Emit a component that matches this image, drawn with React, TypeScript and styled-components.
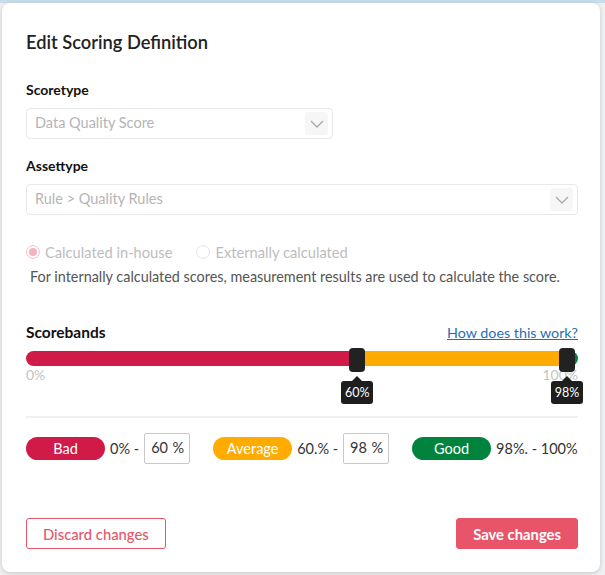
import React from 'react';
import styled, { createGlobalStyle } from 'styled-components';

const GlobalStyle = createGlobalStyle`
  html, body {
    margin: 0;
    padding: 0;
  }
  body {
    background: linear-gradient(#c9dcea 0, #c9dcea 3px, #eef0f2 3px);
    font-family: Lato, 'Noto Sans', sans-serif;
    color: #222;
  }
`;

const Backdrop = styled.div`
  height: 575px;
  box-sizing: border-box;
  padding: 3px 5px 3px 2px;
`;

const Modal = styled.div`
  height: 100%;
  box-sizing: border-box;
  background: #fff;
  border-radius: 8px;
  box-shadow: 0 1px 4px rgba(0, 0, 0, 0.18);
  padding: 27px 22px 23px 24px;
  display: flex;
  flex-direction: column;
`;

const Title = styled.h2`
  margin: 0;
  font-size: 18.3px;
  line-height: 24px;
  font-weight: 600;
  color: #222;
`;

const Label = styled.div<{ $top: number }>`
  margin-top: ${(p) => p.$top}px;
  font-size: 14px;
  line-height: 20px;
  font-weight: 700;
  color: #111;
`;

const SelectBox = styled.div<{ $width?: number }>`
  margin-top: 8px;
  width: ${(p) => (p.$width ? `${p.$width}px` : '100%')};
  height: 31px;
  box-sizing: border-box;
  border: 1px solid #e8e8e8;
  border-radius: 4px;
  display: flex;
  align-items: center;
  justify-content: space-between;
  padding: 0 4px 0 8px;
  font-size: 14.5px;
  color: #b5b5b5;
`;

const SelectText = styled.span`
  margin-top: -3px;
`;

const Chevron = styled.span`
  width: 23px;
  height: 23px;
  background: #f6f6f6;
  border-radius: 3px;
  display: flex;
  align-items: center;
  justify-content: center;
`;

const RadioRow = styled.div`
  margin-top: 27px;
  display: flex;
  align-items: center;
  gap: 24px;
  height: 20px;
`;

const RadioOption = styled.label`
  display: flex;
  align-items: center;
  gap: 5px;
  font-size: 14.7px;
  color: #bdbdbd;
`;

const RadioCircle = styled.span<{ $checked?: boolean }>`
  width: 14px;
  height: 14px;
  box-sizing: border-box;
  border-radius: 50%;
  border: 1px solid ${(p) => (p.$checked ? '#f3c3cb' : '#e4e4e4')};
  display: flex;
  align-items: center;
  justify-content: center;
  &::after {
    content: '';
    width: 8px;
    height: 8px;
    border-radius: 50%;
    background: ${(p) => (p.$checked ? '#f5b3bd' : 'transparent')};
  }
`;

const Description = styled.p`
  margin: 5px 0 0 4px;
  font-size: 14.4px;
  line-height: 20px;
  color: #555;
`;

const SectionHeader = styled.div`
  margin-top: 35px;
  display: flex;
  justify-content: space-between;
  align-items: center;
  height: 20px;
`;

const SectionTitle = styled.span`
  font-size: 15.5px;
  font-weight: 700;
  color: #111;
`;

const HelpLink = styled.a`
  font-size: 14.3px;
  color: #1f6fb5;
  text-decoration: underline;
`;

const Slider = styled.div`
  position: relative;
  margin-top: 9px;
  height: 55px;
`;

const Track = styled.div`
  height: 15px;
  border-radius: 8px;
  overflow: hidden;
  display: flex;
`;

const Segment = styled.div<{ $color: string }>`
  background: ${(p) => p.$color};
`;

const Handle = styled.div`
  position: absolute;
  top: -3px;
  width: 16px;
  height: 24px;
  margin-left: -8px;
  background: #222;
  border-radius: 4px;
`;

const Tip = styled.div`
  position: absolute;
  top: 30px;
  width: 32px;
  height: 23px;
  margin-left: -16px;
  background: #1e1e1e;
  border-radius: 3px;
  color: #fff;
  font-size: 12.5px;
  display: flex;
  align-items: center;
  justify-content: center;
  &::before {
    content: '';
    position: absolute;
    top: -5px;
    left: 11px;
    border-left: 5px solid transparent;
    border-right: 5px solid transparent;
    border-bottom: 5px solid #1e1e1e;
  }
`;

const EndLabel = styled.span<{ $side: 'left' | 'right' }>`
  position: absolute;
  top: 15px;
  ${(p) => p.$side}: 0;
  font-size: 14px;
  color: #c4c4c4;
`;

const Divider = styled.hr`
  margin: 10px 0 0;
  border: none;
  height: 2px;
  background: #eef0f3;
`;

const BandRow = styled.div`
  margin-top: 15px;
  display: flex;
  align-items: center;
  gap: 23px;
`;

const BandGroup = styled.div`
  display: flex;
  align-items: center;
  gap: 5px;
  font-size: 14.5px;
  color: #333;
`;

const Pill = styled.span<{ $color: string }>`
  width: 79px;
  height: 23px;
  border-radius: 12px;
  background: ${(p) => p.$color};
  color: #fff;
  font-size: 14.5px;
  display: flex;
  align-items: center;
  justify-content: center;
`;

const PercentInput = styled.div`
  width: 46px;
  height: 31px;
  box-sizing: border-box;
  border: 1px solid #c9c9c9;
  border-radius: 2px;
  display: flex;
  align-items: center;
  justify-content: space-between;
  padding: 0 5px 2px 6px;
  font-size: 14.5px;
  color: #333;
`;

const Footer = styled.div`
  margin-top: auto;
  display: flex;
  justify-content: space-between;
`;

const Button = styled.button<{ $primary?: boolean }>`
  height: 31px;
  box-sizing: border-box;
  padding: 0 16px;
  border-radius: 3px;
  border: 1px solid #e5566a;
  background: ${(p) => (p.$primary ? '#e8556a' : '#fff')};
  color: ${(p) => (p.$primary ? '#fff' : '#e5566a')};
  font-family: inherit;
  font-size: 14.8px;
  font-weight: ${(p) => (p.$primary ? 700 : 500)};
`;

const ChevronIcon = () => (
  <svg width="14" height="8" viewBox="0 0 14 8">
    <path d="M1 1l6 6 6-6" fill="none" stroke="#a9a9a9" strokeWidth="1.3" />
  </svg>
);

const bands = [
  { name: 'Bad', color: '#d01b48', from: '0% -', value: '60' },
  { name: 'Average', color: '#ffab00', from: '60.% -', value: '98' },
  { name: 'Good', color: '#00843d', from: '98%. - 100%' },
];

export default function App() {
  const low = 60;
  const high = 98;
  return (
    <>
      <GlobalStyle />
      <Backdrop>
        <Modal>
          <Title>Edit Scoring Definition</Title>

          <Label $top={26}>Scoretype</Label>
          <SelectBox $width={307}>
            <SelectText>Data Quality Score</SelectText>
            <Chevron>
              <ChevronIcon />
            </Chevron>
          </SelectBox>

          <Label $top={17}>Assettype</Label>
          <SelectBox>
            <SelectText>Rule &gt; Quality Rules</SelectText>
            <Chevron>
              <ChevronIcon />
            </Chevron>
          </SelectBox>

          <RadioRow>
            <RadioOption>
              <RadioCircle $checked />
              Calculated in-house
            </RadioOption>
            <RadioOption>
              <RadioCircle />
              Externally calculated
            </RadioOption>
          </RadioRow>
          <Description>
            For internally calculated scores, measurement results are used to calculate the score.
          </Description>

          <SectionHeader>
            <SectionTitle>Scorebands</SectionTitle>
            <HelpLink>How does this work?</HelpLink>
          </SectionHeader>

          <Slider>
            <Track>
              <Segment $color="#d01b48" style={{ width: `${low}%` }} />
              <Segment $color="#ffab00" style={{ width: `${high - low}%` }} />
              <Segment $color="#00843d" style={{ flex: 1 }} />
            </Track>
            <EndLabel $side="left">0%</EndLabel>
            <EndLabel $side="right">100%</EndLabel>
            <Handle style={{ left: `${low}%` }} />
            <Handle style={{ left: `${high}%` }} />
            <Tip style={{ left: `${low}%` }}>{low}%</Tip>
            <Tip style={{ left: `${high}%` }}>{high}%</Tip>
          </Slider>

          <Divider />

          <BandRow>
            {bands.map((b) => (
              <BandGroup key={b.name}>
                <Pill $color={b.color}>{b.name}</Pill>
                {b.from}
                {b.value && (
                  <PercentInput>
                    <span>{b.value}</span>
                    <span>%</span>
                  </PercentInput>
                )}
              </BandGroup>
            ))}
          </BandRow>

          <Footer>
            <Button>Discard changes</Button>
            <Button $primary>Save changes</Button>
          </Footer>
        </Modal>
      </Backdrop>
    </>
  );
}
